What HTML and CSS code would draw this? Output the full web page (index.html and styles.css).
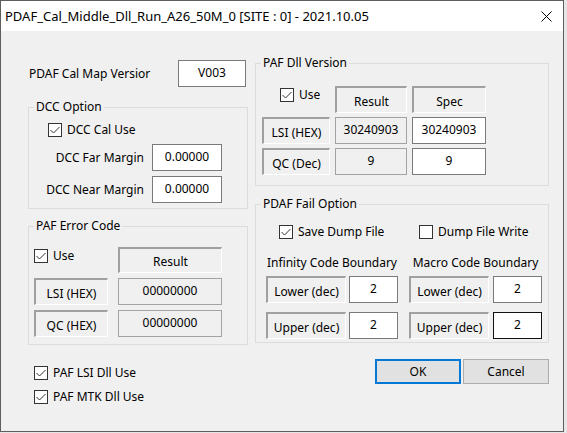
FILE: index.html
```html
<!DOCTYPE html>
<html>
<head>
<meta charset="utf-8">
<link rel="stylesheet" href="styles.css">
</head>
<body>
<div class="window">
  <div class="titlebar">
    <span class="title">PDAF_Cal_Middle_Dll_Run_A26_50M_0 [SITE : 0] - 2021.10.05</span>
    <span class="close-btn"><svg width="11" height="11" viewBox="0 0 11 11"><path d="M0.5 0.5 L10.5 10.5 M10.5 0.5 L0.5 10.5" stroke="#000" stroke-width="1" fill="none"/></svg></span>
  </div>
  <div class="client">
    <div class="columns">
      <div class="col-left">
        <div class="map-row">
          <span class="map-label">PDAF Cal Map Versior</span>
          <div class="edit map-edit">V003</div>
        </div>

        <div class="group dcc">
          <div class="gtitle">DCC Option</div>
          <div class="check dcc-check">
            <svg class="cb" viewBox="0 0 14 14"><rect x="0.5" y="0.5" width="13" height="13" fill="#fff" stroke="#333"/><path d="M2.5 7 L5.5 10 L11.5 4" fill="none" stroke="#333"/></svg>
            <span>DCC Cal Use</span>
          </div>
          <div class="field-row far">
            <span class="field-label">DCC Far Margin</span>
            <div class="edit margin-edit">0.00000</div>
          </div>
          <div class="field-row near">
            <span class="field-label">DCC Near Margin</span>
            <div class="edit margin-edit">0.00000</div>
          </div>
        </div>

        <div class="group err">
          <div class="gtitle">PAF Error Code</div>
          <div class="err-grid">
            <div class="check cell-check">
              <svg class="cb" viewBox="0 0 14 14"><rect x="0.5" y="0.5" width="13" height="13" fill="#fff" stroke="#333"/><path d="M2.5 7 L5.5 10 L11.5 4" fill="none" stroke="#333"/></svg>
              <span>Use</span>
            </div>
            <div class="sunken">Result</div>
            <div class="sunken">LSI (HEX)</div>
            <div class="ro">00000000</div>
            <div class="sunken">QC (HEX)</div>
            <div class="ro">00000000</div>
          </div>
        </div>
      </div>

      <div class="col-right">
        <div class="group dll">
          <div class="gtitle">PAF Dll Version</div>
          <div class="dll-grid">
            <div class="check cell-check dll-check">
              <svg class="cb" viewBox="0 0 14 14"><rect x="0.5" y="0.5" width="13" height="13" fill="#fff" stroke="#333"/><path d="M2.5 7 L5.5 10 L11.5 4" fill="none" stroke="#333"/></svg>
              <span>Use</span>
            </div>
            <div class="sunken">Result</div>
            <div class="sunken">Spec</div>
            <div class="sunken">LSI (HEX)</div>
            <div class="ro">30240903</div>
            <div class="edit">30240903</div>
            <div class="sunken">QC (Dec)</div>
            <div class="ro">9</div>
            <div class="edit">9</div>
          </div>
        </div>

        <div class="group fail">
          <div class="gtitle">PDAF Fail Option</div>
          <div class="fail-body">
            <div class="fail-col inf">
              <div class="check fail-check">
                <svg class="cb" viewBox="0 0 14 14"><rect x="0.5" y="0.5" width="13" height="13" fill="#fff" stroke="#333"/><path d="M2.5 7 L5.5 10 L11.5 4" fill="none" stroke="#333"/></svg>
                <span>Save Dump File</span>
              </div>
              <div class="fail-head">Infinity Code Boundary</div>
              <div class="fail-row first">
                <div class="sunken fail-label">Lower (dec)</div>
                <div class="edit fail-edit">2</div>
              </div>
              <div class="fail-row">
                <div class="sunken fail-label">Upper (dec)</div>
                <div class="edit fail-edit">2</div>
              </div>
            </div>
            <div class="fail-col mac">
              <div class="check fail-check">
                <svg class="cb" viewBox="0 0 14 14"><rect x="0.5" y="0.5" width="13" height="13" fill="#fff" stroke="#333"/></svg>
                <span>Dump File Write</span>
              </div>
              <div class="fail-head">Macro Code Boundary</div>
              <div class="fail-row first">
                <div class="sunken fail-label">Lower (dec)</div>
                <div class="edit fail-edit">2</div>
              </div>
              <div class="fail-row">
                <div class="sunken fail-label">Upper (dec)</div>
                <div class="edit fail-edit focused">2</div>
              </div>
            </div>
          </div>
        </div>
      </div>
    </div>

    <div class="bottom">
      <div class="bottom-checks">
        <div class="check">
          <svg class="cb" viewBox="0 0 14 14"><rect x="0.5" y="0.5" width="13" height="13" fill="#fff" stroke="#333"/><path d="M2.5 7 L5.5 10 L11.5 4" fill="none" stroke="#333"/></svg>
          <span>PAF LSI Dll Use</span>
        </div>
        <div class="check">
          <svg class="cb" viewBox="0 0 14 14"><rect x="0.5" y="0.5" width="13" height="13" fill="#fff" stroke="#333"/><path d="M2.5 7 L5.5 10 L11.5 4" fill="none" stroke="#333"/></svg>
          <span>PAF MTK Dll Use</span>
        </div>
      </div>
      <div class="buttons">
        <div class="btn default">OK</div>
        <div class="btn">Cancel</div>
      </div>
    </div>
  </div>
</div>
</body>
</html>
```

FILE: styles.css
```css
* { box-sizing: border-box; }

html, body {
  margin: 0;
  padding: 0;
  background: #e6e6e6;
}

body {
  font-family: "Noto Sans", "DejaVu Sans", sans-serif;
  font-size: 12px;
  color: #000;
}

.window {
  width: 564px;
  height: 432px;
  border: 1px solid #5e5e5e;
  background: #f0f0f0;
  display: flex;
  flex-direction: column;
}

.titlebar {
  height: 30px;
  background: #fff;
  display: flex;
  align-items: center;
  justify-content: space-between;
  padding-left: 4px;
  flex: none;
}

.title {
  font-size: 13px;
  white-space: nowrap;
}

.close-btn {
  width: 34px;
  height: 30px;
  display: flex;
  align-items: center;
  justify-content: center;
}

.client {
  padding-left: 27px;
  display: flex;
  flex-direction: column;
}

.columns {
  display: flex;
  align-items: flex-start;
  gap: 7px;
}

.col-left {
  width: 220px;
  padding-top: 29px;
}

.col-right {
  width: 294px;
  padding-top: 32px;
}

/* common controls */
.check {
  display: flex;
  align-items: center;
  gap: 5px;
  height: 14px;
  white-space: nowrap;
  line-height: 16px;
}

.cb {
  width: 14px;
  height: 14px;
  flex: none;
  display: block;
}

.edit {
  background: #fff;
  border: 1px solid #7a7a7a;
  text-align: center;
  line-height: 16px;
  padding-top: 4px;
  height: 27px;
  white-space: nowrap;
}

.edit.focused {
  border-color: #111;
}

.ro {
  background: #f0f0f0;
  border: 1px solid #a3a3a3;
  text-align: center;
  line-height: 16px;
  padding-top: 4px;
  white-space: nowrap;
}

.sunken {
  background: #f0f0f0;
  border-top: 2px solid #a0a0a0;
  border-left: 2px solid #a0a0a0;
  border-right: 1px solid #fff;
  border-bottom: 1px solid #fff;
  display: flex;
  align-items: center;
  justify-content: center;
  padding-top: 2px;
  white-space: nowrap;
}

/* group box */
.group {
  border: 1px solid #dcdcdc;
}

.gtitle {
  margin: -9px 0 0 5px;
  padding: 0 2px;
  background: #f0f0f0;
  width: fit-content;
  line-height: 16px;
  height: 16px;
  white-space: nowrap;
}

/* left column */
.map-row {
  display: flex;
  align-items: center;
  height: 27px;
}

.map-label {
  width: 150px;
  padding-left: 1px;
  white-space: nowrap;
}

.map-edit {
  width: 68px;
}

.dcc {
  margin-top: 20px;
  padding-bottom: 5px;
}

.dcc-check {
  margin: 8px 0 0 19px;
}

.field-row {
  display: flex;
  align-items: center;
  gap: 8px;
}

.field-row.far { margin-top: 7px; }
.field-row.near { margin-top: 5px; }

.field-label {
  width: 115px;
  text-align: right;
  white-space: nowrap;
}

.margin-edit {
  width: 70px;
}

.err {
  margin-top: 17px;
  padding-bottom: 7px;
}

.err-grid {
  display: grid;
  grid-template-columns: 74px 104px;
  grid-template-rows: 26px 27px 27px;
  column-gap: 10px;
  row-gap: 5px;
  margin: 13px 0 0 5px;
}

.cell-check {
  align-self: start;
  margin-top: 2px;
}

/* right column */
.dll {
  padding-bottom: 10px;
}

.dll-grid {
  display: grid;
  grid-template-columns: 68px 72px 74px;
  grid-template-rows: 27px 27px 27px;
  column-gap: 5px;
  row-gap: 4px;
  margin: 15px 0 0 6px;
}

.dll-check {
  margin-left: 18px;
  margin-top: 2px;
}

.fail {
  margin-top: 18px;
  padding-bottom: 3px;
}

.fail-body {
  display: flex;
  gap: 11px;
  margin-left: 10px;
}

.fail-col {
  display: flex;
  flex-direction: column;
}

.fail-col.inf { width: 132px; }
.fail-col.mac { width: 133px; }

.fail-check {
  margin-top: 13px;
}

.inf .fail-check { margin-left: 13px; }
.mac .fail-check { margin-left: 10px; }

.fail-head {
  margin-top: 16px;
  line-height: 16px;
  text-align: center;
  white-space: nowrap;
  display: flex;
  justify-content: center;
}

.fail-row {
  display: flex;
  justify-content: space-between;
  height: 27px;
  margin-top: 9px;
}

.fail-row.first { margin-top: 5px; }

.fail-label { width: 80px; }
.fail-edit { width: 49px; }

/* bottom */
.bottom {
  width: 521px;
  margin-top: 14px;
  display: flex;
  justify-content: space-between;
  align-items: flex-start;
}

.bottom-checks {
  display: flex;
  flex-direction: column;
  gap: 10px;
  padding: 7px 0 0 6px;
}

.buttons {
  display: flex;
  gap: 2px;
}

.btn {
  width: 86px;
  height: 25px;
  background: #e1e1e1;
  border: 1px solid #adadad;
  display: flex;
  align-items: center;
  justify-content: center;
}

.btn.default {
  border: 2px solid #0078d7;
}
```
